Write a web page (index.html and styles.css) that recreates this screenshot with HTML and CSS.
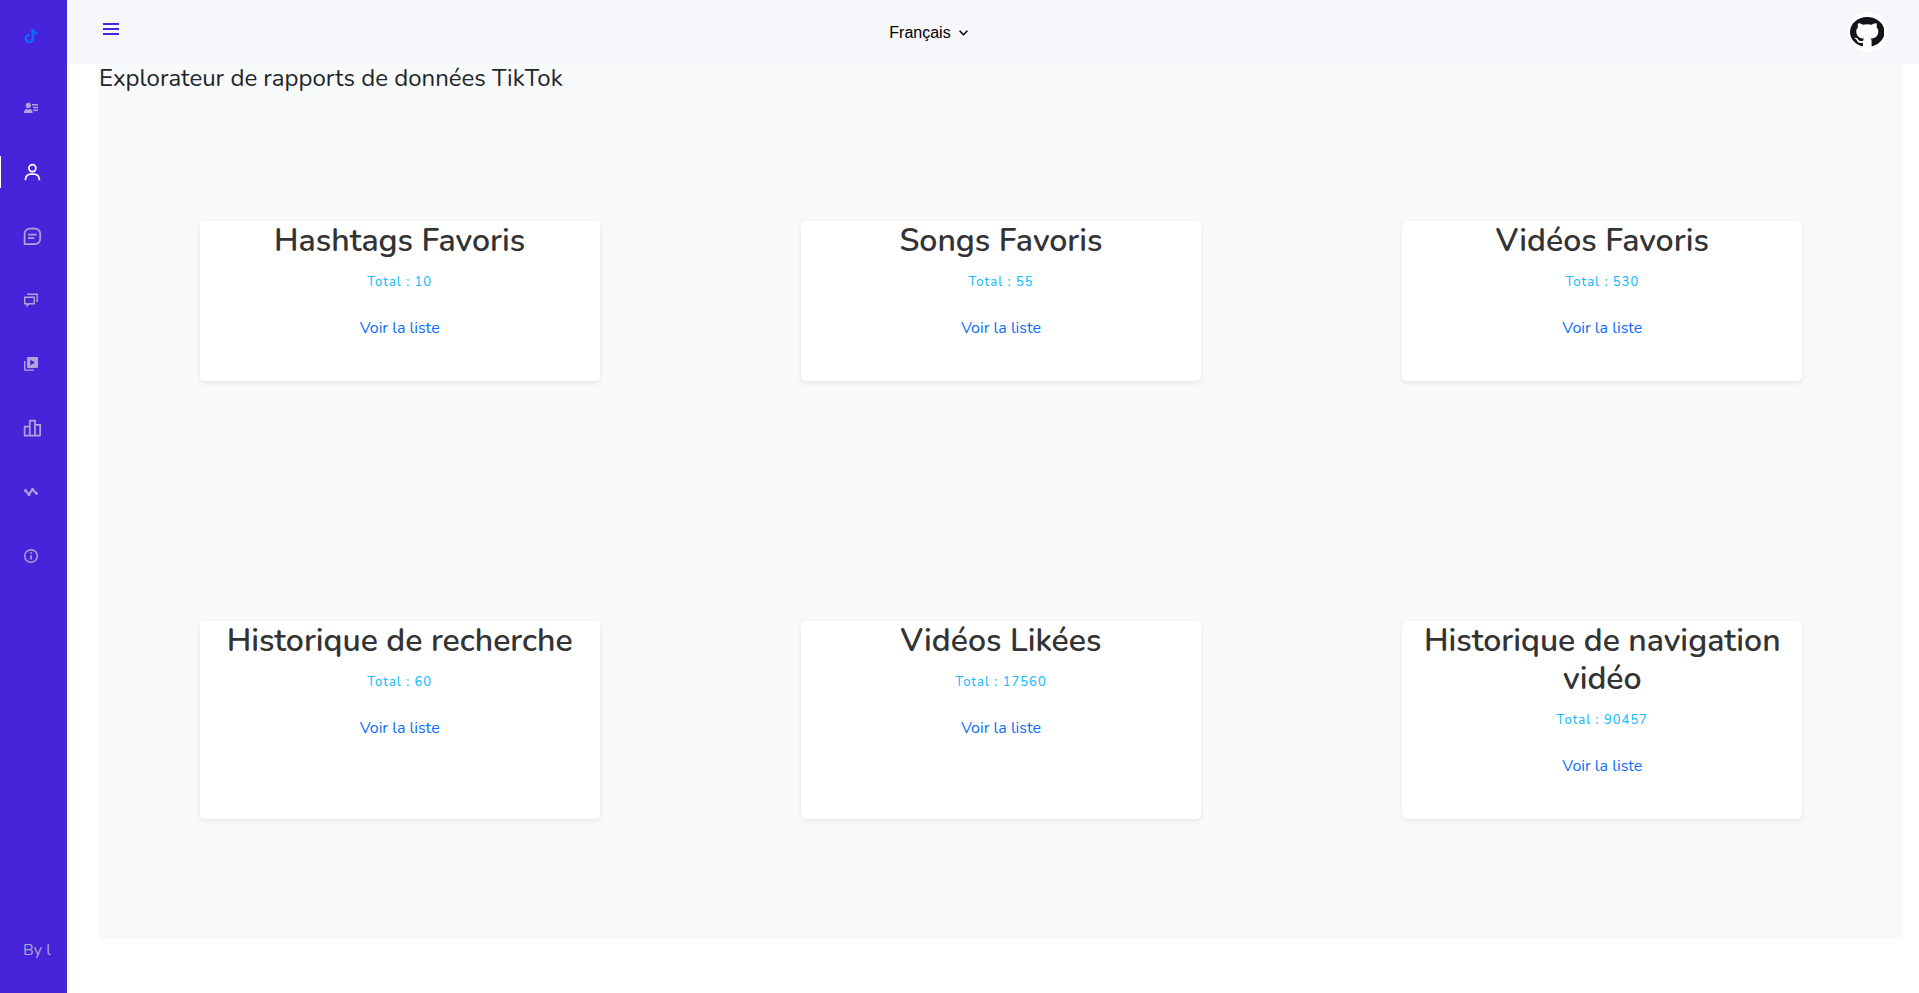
FILE: index.html
```html
<!DOCTYPE html>
<html lang="fr">
<head>
<meta charset="utf-8">
<title>TikTok</title>
<link rel="stylesheet" href="styles.css">
</head>
<body>
<div class="app">
  <nav class="sidebar">
    <a class="brand"><svg class="ic-sm note" viewBox="0 0 16 16"><path d="M9 0h1.980c.144.715.54 1.617 1.235 2.512C12.895 3.389 13.797 4 15 4v2c-1.753 0-3.070-.814-4-1.829V11a5 5 0 1 1-5-5v2a3 3 0 1 0 3 3V0Z"/></svg></a>
    <a class="item"><svg class="ic-sm" viewBox="0 0 14 14"><circle cx="4.3" cy="4.400" r="2.600"/><path d="M0 12c0-2.600 1.300-4 2.600-4 1 .8 2.400.8 3.400 0 1.400 0 2.600 1.400 2.600 4zM8 3h6v1.500H8zM9 5.800h5v1.500H9zM9.300 8.600H14v1.500H9.300z"/></svg></a>
    <a class="item active"><svg class="ic-lg" viewBox="0 0 24 24"><path d="M12 2a5 5 0 1 0 5 5 5 5 0 0 0-5-5zm0 8a3 3 0 1 1 3-3 3 3 0 0 1-3 3zm9 11v-1a7 7 0 0 0-7-7h-4a7 7 0 0 0-7 7v1h2v-1a5 5 0 0 1 5-5h4a5 5 0 0 1 5 5v1z"/></svg></a>
    <a class="item"><svg class="ic-lg line" viewBox="0 0 24 24"><path d="M3 21V9a6 6 0 0 1 6-6h6a6 6 0 0 1 6 6v6a6 6 0 0 1-6 6zM7 10h10M7 14h7"/></svg></a>
    <a class="item"><svg class="ic-sm line thin" viewBox="0 0 14 14"><path d="M.7 4.200h9.600v6.500H5.200L3.100 12.700V10.700H.7zM3.200 1.300h10v6.900h-1"/></svg></a>
    <a class="item"><svg class="ic-sm" viewBox="0 0 14 14"><path fill-rule="evenodd" d="M4 0h9a1 1 0 0 1 1 1v9a1 1 0 0 1-1 1H4a1 1 0 0 1-1-1V1a1 1 0 0 1 1-1zm2.300 2.700v5.600L11 5.500zM0 4h1.400v8.400H10v1.400H1a1 1 0 0 1-1-1z"/></svg></a>
    <a class="item"><svg class="ic-lg line" viewBox="0 0 24 24"><path d="M3 20V10h6v10M9 20V3h6v17M15 20V8h6v12M2.300 20.300h19.400"/></svg></a>
    <a class="item"><svg class="ic-sm line" viewBox="0 0 14 14"><path d="M1.500 5.700 5 9.200 8.500 4.500 12.300 8.200"/><g class="dot"><circle cx="1.500" cy="5.600" r="1.500"/><circle cx="4.900" cy="9.500" r="1.500"/><circle cx="8.500" cy="4.300" r="1.500"/><circle cx="12.500" cy="8.300" r="1.500"/></g></svg></a>
    <a class="item"><svg class="ic-sm line thin" viewBox="0 0 14 14"><circle cx="7" cy="7" r="6.300"/><path d="M7 3.300v1.500M7 6.200v4.300" stroke-width="1.700"/></svg></a>
    <span class="author">By l</span>
  </nav>
  <div class="page">
    <header class="topbar">
      <svg class="burger" viewBox="0 0 16 12"><path d="M0 0h16v2H0zM0 5h16v2H0zM0 10h16v2H0z"/></svg>
      <div class="lang">Français<svg class="chev" viewBox="0 0 9 6"><path d="M.6.800 4.500 4.700 8.400.800"/></svg></div>
      <div class="avatar"><svg class="github" viewBox="0 0 16 16" preserveAspectRatio="none"><path d="M8 0C3.580 0 0 3.580 0 8c0 3.540 2.290 6.530 5.470 7.590.4.070.55-.17.55-.38 0-.19-.010-.82-.010-1.490-2.010.37-2.530-.49-2.690-.94-.09-.23-.48-.94-.82-1.130-.28-.15-.68-.52-.010-.53.63-.010 1.080.58 1.230.82.72 1.210 1.870.87 2.330.66.070-.52.28-.87.510-1.070-1.780-.2-3.640-.89-3.640-3.950 0-.87.31-1.590.82-2.150-.08-.2-.36-1.020.08-2.120 0 0 .67-.21 2.200.82.64-.18 1.320-.27 2-.27s1.360.09 2 .27c1.530-1.040 2.200-.82 2.200-.82.44 1.100.16 1.920.08 2.120.51.56.82 1.270.82 2.150 0 3.070-1.870 3.750-3.650 3.950.29.25.54.73.54 1.480 0 1.070-.010 1.930-.010 2.200 0 .21.15.46.55.38A8.010 8.010 0 0 0 16 8c0-4.420-3.580-8-8-8z"/></svg></div>
    </header>
    <main class="content">
      <h1 class="heading">Explorateur de rapports de données TikTok</h1>
      <section class="cards">
        <article class="card"><h2>Hashtags Favoris</h2><p class="total">Total : 10</p><a class="link">Voir la liste</a></article>
        <article class="card"><h2>Songs Favoris</h2><p class="total">Total : 55</p><a class="link">Voir la liste</a></article>
        <article class="card"><h2>Vidéos Favoris</h2><p class="total">Total : 530</p><a class="link">Voir la liste</a></article>
        <article class="card"><h2>Historique de recherche</h2><p class="total">Total : 60</p><a class="link">Voir la liste</a></article>
        <article class="card"><h2>Vidéos Likées</h2><p class="total">Total : 17560</p><a class="link">Voir la liste</a></article>
        <article class="card"><h2>Historique de navigation vidéo</h2><p class="total">Total : 90457</p><a class="link">Voir la liste</a></article>
      </section>
    </main>
  </div>
</div>
</body>
</html>
```
FILE: styles.css
```css
* { box-sizing: border-box; }
body { margin: 0; background: #fff; font-family: Nunito, Lato, sans-serif; font-size: 16px; color: #212529; }
.app { display: flex; height: 993px; overflow: hidden; }
.sidebar { width: 67px; flex: none; background: #4723d9; display: flex; flex-direction: column; color: #afa5d9; }
.sidebar svg { display: block; fill: currentColor; }
.sidebar svg.line { fill: none; stroke: currentColor; stroke-width: 2; }
.sidebar svg.thin { stroke-width: 1.400; }
.sidebar svg.note { stroke: currentColor; stroke-width: .8; }
.sidebar .dot { fill: currentColor; stroke: none; }
.ic-sm { width: 14px; height: 14px; }
.ic-lg { width: 20.800px; height: 20.800px; margin-left: -1.600px; }
.brand { height: 72px; padding: 29px 0 0 24px; color: #0d6efd; margin-bottom: 4px; }
.item { height: 32px; margin-bottom: 32px; padding-left: 24px; display: flex; align-items: center; }
.brand + .item { margin-top: 16px; }
.active { color: #fff; border-left: 1px solid #fff; padding-left: 23px; }
.author { margin-top: auto; padding: 0 0 31px 23px; line-height: 24px; }
.page { flex: 1; }
.topbar { height: 64px; background: #f7f6fb; display: flex; justify-content: space-between; align-items: center; padding: 0 31px 0 36px; }
.burger { width: 16px; height: 12px; fill: #4723d9; margin-bottom: 6px; }
.lang { font-family: "Liberation Sans", Arial, sans-serif; color: #000; line-height: 18px; display: flex; align-items: center; margin: 2px 110px 0 0; }
.chev { width: 9px; height: 6px; margin-left: 8px; fill: none; stroke: #000; stroke-width: 1.600; }
.avatar { width: 40px; height: 40px; border-radius: 50%; background: #fff; padding: 5px 0 0 2px; }
.github { display: block; width: 34.500px; height: 30px; fill: #15141a; }
.content { margin: 0 16px 0 32px; height: 875px; background: #f8f9fa; }
.heading { margin: 0; height: 57px; font-weight: 400; font-size: 24px; line-height: 29px; }
.cards { display: grid; grid-template-columns: repeat(3, 1fr); grid-template-rows: 160px 198px; row-gap: 240px; padding-top: 100px; justify-items: center; }
.card { width: 400px; background: #fff; border-radius: 5px; box-shadow: 0 2px 5px rgba(0,0,0,.08); text-align: center; }
.card h2 { margin: 0; padding: 1px 0 8px; font-weight: 600; font-size: 32px; line-height: 38px; color: #333; }
.total { margin: 0; font-size: 13px; line-height: 28px; letter-spacing: 1px; color: #1abcff; font-weight: 500; }
.link { display: block; margin-top: 20px; line-height: 24px; color: #0d6efd; }
```
